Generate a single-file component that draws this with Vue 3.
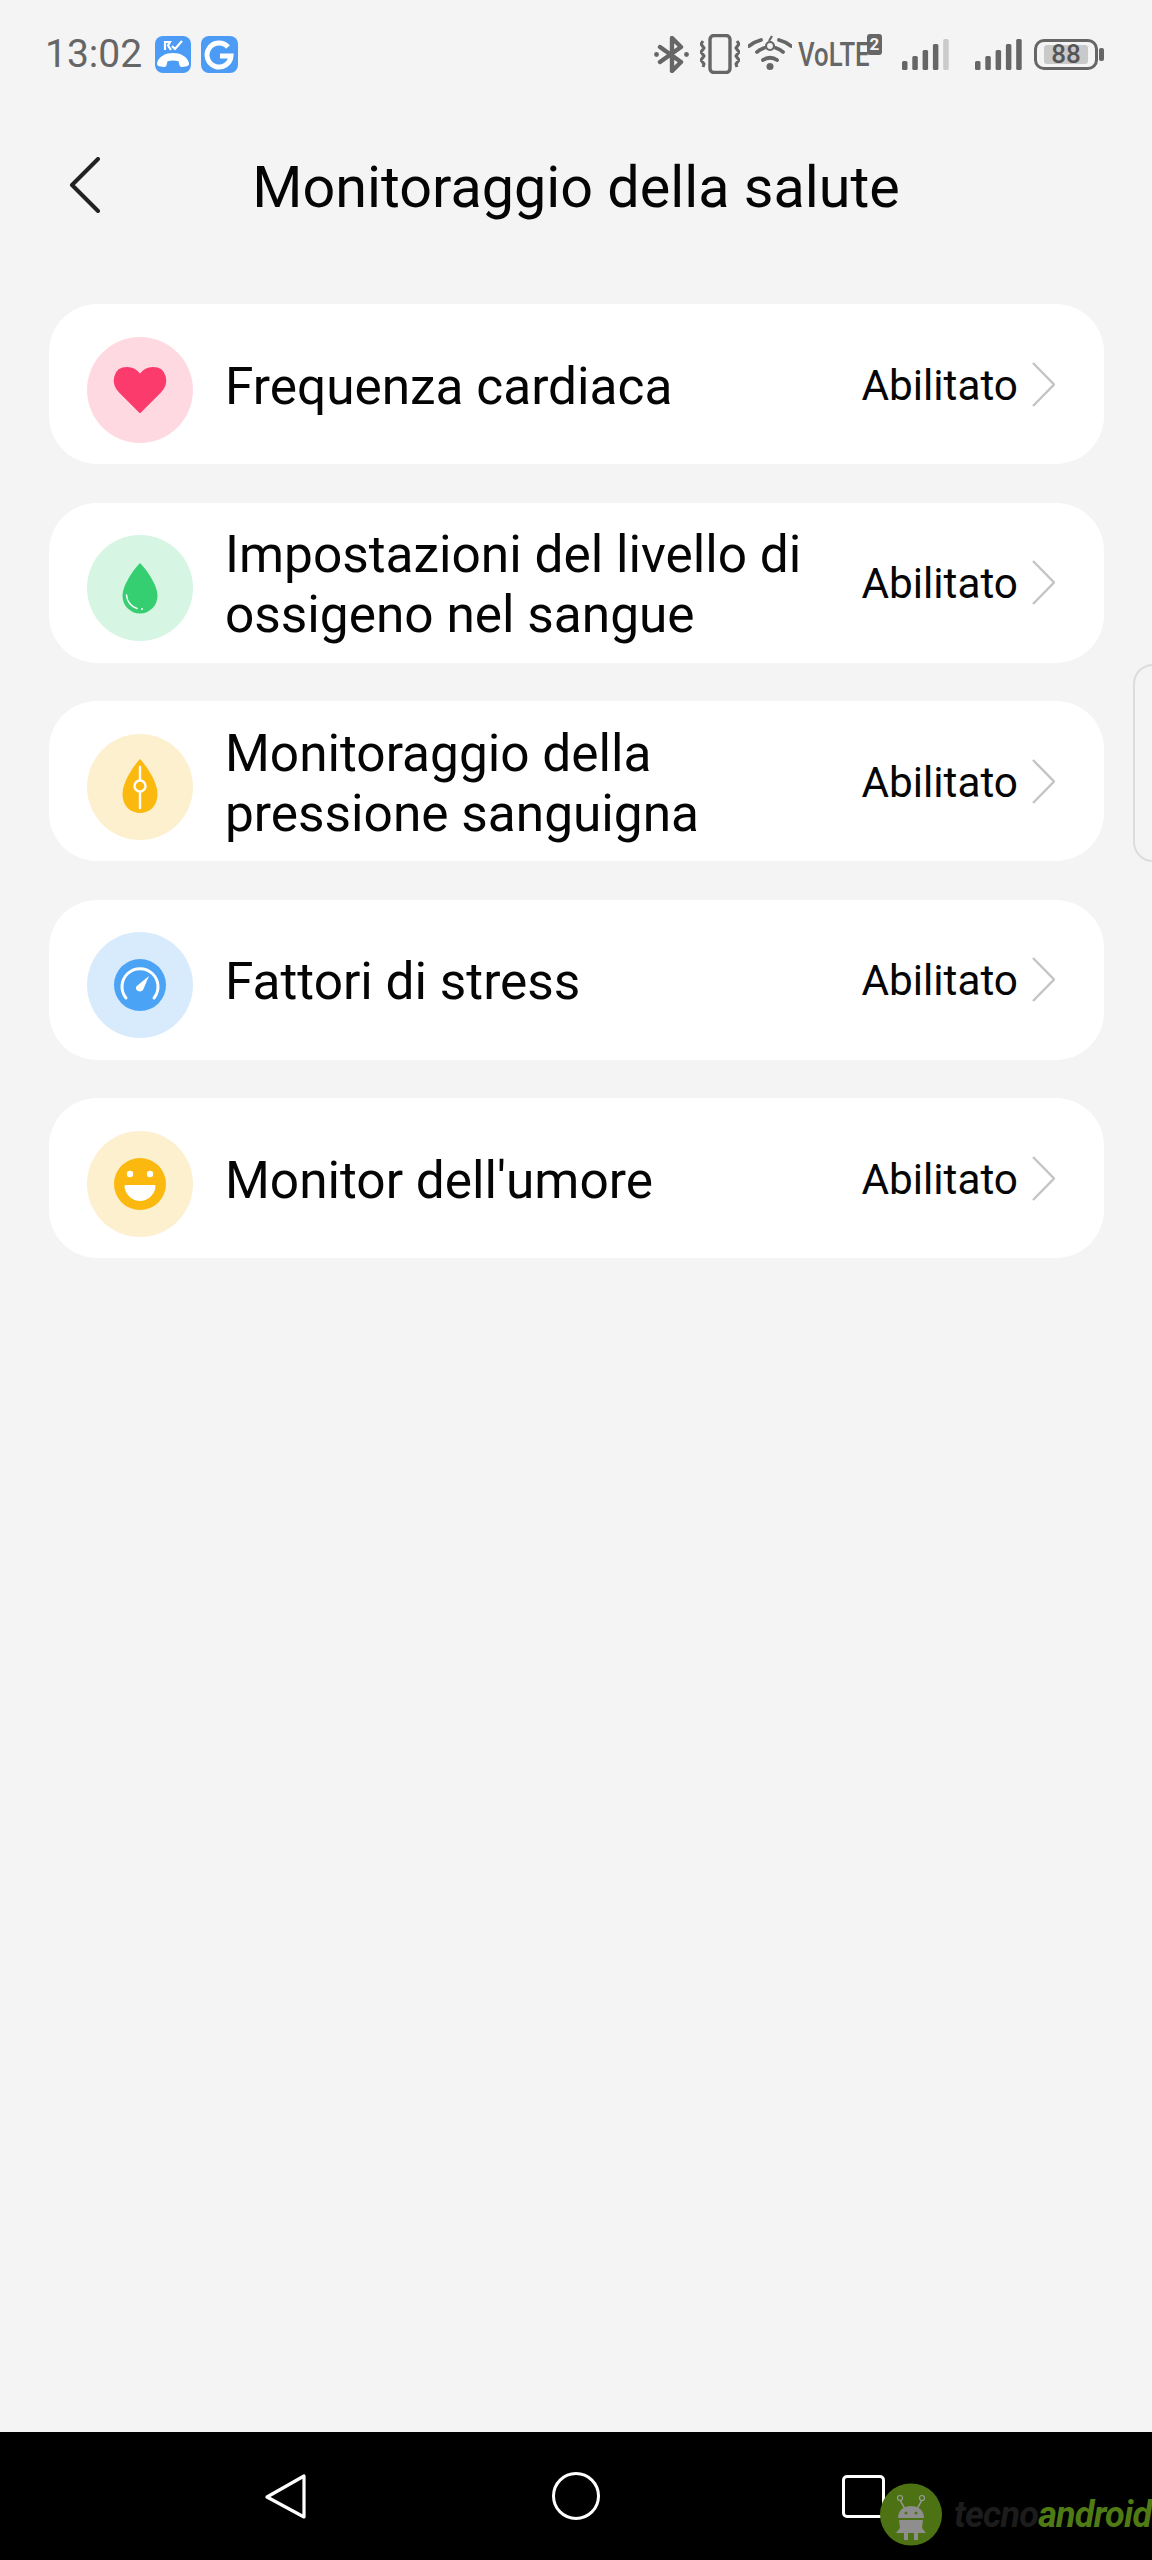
<template>
  <div class="screen">
    <header class="status">
      <span class="time">13:02</span>
      <svg class="app-icon" viewBox="0 0 36 37">
        <rect width="36" height="37" rx="8" fill="#4c9bf5" />
        <path d="M2 27c2-7 9-10 16-10s14 3 16 10c.4 1.600-.6 3-2 3.200l-5 .8c-1.300.2-2.200-.6-2.500-1.700l-1-4c-3.500-1.200-7.500-1.200-11 0l-1 4c-.3 1.100-1.200 1.900-2.500 1.700l-5-.8C2.600 30 1.600 28.600 2 27z" fill="#fff" />
        <path d="M10 14V6h5l-2 3.500 3 4.500M17 10l3 3 7-8" fill="none" stroke="#fff" stroke-width="2.200" />
      </svg>
      <svg class="app-icon second" viewBox="0 0 37 37">
        <rect width="37" height="37" rx="8" fill="#4c9bf5" />
        <path d="M27 11a12 12 0 1 0 3 9H19" fill="none" stroke="#fff" stroke-width="5" />
      </svg>

      <div class="status-right">
        <svg class="bt" viewBox="0 0 35 37">
          <path d="M6 11l21 15-9 9V2l9 9L6 26" fill="none" stroke="#666" stroke-width="4.400" stroke-linejoin="round" stroke-linecap="round" />
          <circle cx="2.500" cy="18.500" r="2.400" fill="#666" />
          <circle cx="32.500" cy="18.500" r="2.400" fill="#666" />
        </svg>
        <svg class="vib" viewBox="0 0 40 40">
          <rect x="10" y="1.500" width="20" height="37" rx="4" fill="none" stroke="#666" stroke-width="3.400" />
          <path d="M3 7l-2 3 3 4-3 4 3 4-3 4 3 4-1 3M37 7l2 3-3 4 3 4-3 4 3 4-3 4 1 3" fill="none" stroke="#666" stroke-width="3" stroke-linejoin="round" />
        </svg>
        <svg class="wifi" viewBox="0 0 44 35">
          <path d="M1 11c4-3 8-5 12-6M31 5c4 1 8 3 12 6M9 17c2-2 4-3 7-4M28 13c3 1 5 2 7 4M15 25c4-3 10-3 14 0" fill="none" stroke="#666" stroke-width="3.800" stroke-linecap="round" />
          <circle cx="22" cy="31.500" r="3.500" fill="#666" />
          <path d="M24 1l-3 5" fill="none" stroke="#666" stroke-width="2.200" />
          <circle cx="22" cy="11" r="4" fill="none" stroke="#666" stroke-width="2.200" />
        </svg>
        <div class="volte">
          <span class="volte-text">VoLTE</span>
          <span class="sim">2</span>
        </div>
        <svg class="signal" viewBox="0 0 47 31">
          <rect v-for="(b, i) in bars" :key="i" :x="i * 10.300" :y="31 - b" width="5.500" :height="b" rx="1.500" :fill="i === 4 ? '#cbcbcb' : '#666'" />
        </svg>
        <svg class="signal second-sim" viewBox="0 0 47 31">
          <rect v-for="(b, i) in bars" :key="i" :x="i * 10.300" :y="31 - b" width="5.500" :height="b" rx="1.500" fill="#666" />
        </svg>
        <div class="battery">
          <div class="cell"><span class="level">88</span></div>
          <div class="nub"></div>
        </div>
      </div>
    </header>

    <div class="titlebar">
      <svg class="back" viewBox="0 0 31 56">
        <path d="M29 2L3 28l26 26" fill="none" stroke="#222" stroke-width="4" stroke-linecap="round" stroke-linejoin="round" />
      </svg>
      <h1 class="title">Monitoraggio della salute</h1>
    </div>

    <main class="list">
      <div v-for="item in items" :key="item.id" class="card">
        <div class="badge" :class="`badge--${item.id}`">
          <svg v-if="item.id === 'heart'" viewBox="0 0 106 106">
            <path d="M53 75L33 55c-9-9-6-24 7-24 6 0 10 3 13 7 3-4 7-7 13-7 13 0 16 15 7 24z" fill="#fb3b6c" stroke="#fb3b6c" stroke-width="2" stroke-linejoin="round" />
          </svg>
          <svg v-else-if="item.id === 'oxygen'" viewBox="0 0 106 106">
            <path d="M53 28c-3 3-17.500 20-17.500 33a17.500 17.500 0 0 0 35 0C70.500 48 56 31 53 28z" fill="#35cf72" />
            <path d="M39.500 60c.5 7 5 12 10.500 13.500" fill="none" stroke="#fff" stroke-width="1.500" stroke-linecap="round" />
            <circle cx="55" cy="74" r="1" fill="#fff" />
          </svg>
          <svg v-else-if="item.id === 'pressure'" viewBox="0 0 106 106">
            <path d="M53 25c-3 3-17.500 21-17.500 35 0 13 9 19 17.500 19s17.500-6 17.500-19C70.500 46 56 28 53 25z" fill="#fbb80f" />
            <path d="M53 33v13M53 58v16" stroke="#fff" stroke-width="2.400" stroke-linecap="round" />
            <circle cx="53" cy="52" r="5.500" fill="none" stroke="#fff" stroke-width="2.400" />
          </svg>
          <svg v-else-if="item.id === 'stress'" viewBox="0 0 106 106">
            <circle cx="53" cy="53" r="26" fill="#4ba3f5" />
            <path d="M39 66a18 18 0 1 1 28 0" fill="none" stroke="#fff" stroke-width="3" stroke-linecap="round" />
            <path d="M62 44l-6 14c-1 2-6 2-7-1-.5-2 .5-3 2-4z" fill="#fff" />
          </svg>
          <svg v-else viewBox="0 0 106 106">
            <circle cx="53" cy="53" r="26" fill="#fbb80f" />
            <circle cx="43" cy="43" r="3.200" fill="#fff" />
            <circle cx="63" cy="43" r="3.200" fill="#fff" />
            <path d="M39 54h28c1 0 1.500.5 1.500 1.500C68 64 60 70 53 70s-15-6-15.500-14.500c0-1 .5-1.500 1.500-1.500z" fill="#fff" />
          </svg>
        </div>
        <p class="label">{{ item.label }}</p>
        <span class="state">Abilitato</span>
        <svg class="chevron" viewBox="0 0 23 45">
          <path d="M1 1l21 21.500L1 44" fill="none" stroke="#c4c4c4" stroke-width="2.400" />
        </svg>
      </div>
    </main>

    <div class="edge-handle"></div>

    <nav class="nav">
      <svg class="nav-back" viewBox="0 0 42 47">
        <path d="M39 3v41L2 24z" fill="none" stroke="#fff" stroke-width="3.200" stroke-linejoin="round" />
      </svg>
      <div class="nav-home"></div>
      <div class="nav-recent"></div>

      <div class="watermark">
        <svg class="robot" viewBox="0 0 62 63">
          <circle cx="31" cy="31.500" r="31" fill="#4d7213" />
          <path d="M20 17l5 9M42 17l-5 9" stroke="#999" stroke-width="1.500" />
          <circle cx="20" cy="15" r="2.500" fill="none" stroke="#999" stroke-width="1.200" />
          <circle cx="42" cy="15" r="2.500" fill="none" stroke="#999" stroke-width="1.200" />
          <path d="M18 35c0-8 6-12 13-12s13 4 13 12z" fill="#8e8e8e" />
          <path d="M19 37h24l-1 8 4 5H38v7h-4v-7h-6v7h-4v-7H16l4-5z" fill="#8e8e8e" />
          <circle cx="26" cy="30" r="1.500" fill="#4d7213" />
          <circle cx="36" cy="30" r="1.500" fill="#4d7213" />
        </svg>
        <span class="wm-text"><span class="wm-tecno">tecno</span><span class="wm-android">android</span></span>
      </div>
    </nav>
  </div>
</template>

<script setup>
const bars = [9, 14, 20, 26, 31]

const items = [
  { id: 'heart', label: 'Frequenza cardiaca' },
  { id: 'oxygen', label: 'Impostazioni del livello di ossigeno nel sangue' },
  { id: 'pressure', label: 'Monitoraggio della pressione sanguigna' },
  { id: 'stress', label: 'Fattori di stress' },
  { id: 'mood', label: "Monitor dell'umore" }
]
</script>

<style scoped>
.screen {
  position: relative;
  display: flex;
  flex-direction: column;
  width: 1152px;
  height: 2560px;
  overflow: hidden;
  background: #f4f4f4;
  font-family: Roboto, "Liberation Sans", sans-serif;
  color: #050505;
}

/* status bar */
.status {
  display: flex;
  align-items: center;
  height: 108px;
  padding: 0 48px 0 45px;
  color: #666;
}

.time {
  font-size: 39px;
  line-height: 1;
  margin-right: 13px;
}

.app-icon {
  width: 36px;
  height: 37px;
}

.app-icon.second {
  width: 37px;
  margin-left: 10px;
}

.status-right {
  display: flex;
  align-items: center;
  margin-left: auto;
}

.bt {
  width: 35px;
  height: 37px;
}

.vib {
  width: 40px;
  height: 40px;
  margin-left: 11px;
}

.wifi {
  width: 44px;
  height: 35px;
  margin-left: 8px;
  margin-top: -4px;
}

.volte {
  display: flex;
  width: 84px;
  height: 36px;
  margin-left: 6px;
  margin-top: -4px;
}

.volte-text {
  width: 69px;
  margin-top: 6px;
  font-size: 33px;
  line-height: 30px;
  font-weight: 500;
  transform: scaleX(0.78);
  transform-origin: left center;
}

.sim {
  width: 15px;
  height: 21px;
  border-radius: 3px;
  background: #666;
  color: #f4f4f4;
  font-size: 17px;
  font-weight: 700;
  line-height: 21px;
  text-align: center;
}

.signal {
  width: 47px;
  height: 31px;
  margin-left: 20px;
}

.signal.second-sim {
  margin-left: 26px;
}

.battery {
  display: flex;
  align-items: center;
  margin-left: 12px;
}

.cell {
  display: flex;
  align-items: center;
  justify-content: center;
  box-sizing: border-box;
  width: 64px;
  height: 31px;
  border: 3px solid #666;
  border-radius: 10px;
}

.level {
  width: 44px;
  height: 19px;
  border-radius: 3px;
  background: #c9c9c9;
  color: #555;
  font-size: 26px;
  font-weight: 500;
  line-height: 19px;
  text-align: center;
}

.nub {
  width: 5px;
  height: 13px;
  margin-left: 1px;
  border-radius: 2px;
  background: #666;
}

/* title row */
.titlebar {
  display: flex;
  align-items: center;
  justify-content: center;
  position: relative;
  height: 160px;
}

.back {
  position: absolute;
  left: 69px;
  top: 49px;
  width: 31px;
  height: 56px;
}

.title {
  margin: 0;
  font-size: 57.500px;
  font-weight: 400;
  line-height: 60px;
}

/* settings cards */
.list {
  display: flex;
  flex-direction: column;
  gap: 38.500px;
  margin-top: 36px;
  padding: 0 48px 0 49px;
}

.card {
  display: flex;
  align-items: center;
  height: 160px;
  padding: 0 49px 0 38px;
  border-radius: 48px;
  background: #fff;
}

.badge {
  flex: none;
  width: 106px;
  height: 106px;
  margin-top: 11px;
  border-radius: 50%;
}

.badge svg {
  display: block;
  width: 106px;
  height: 106px;
}

.badge--heart {
  background: #ffd9e2;
}

.badge--oxygen {
  background: #d6f5e3;
}

.badge--pressure,
.badge--mood {
  background: #fdf0cf;
}

.badge--stress {
  background: #d8ebfd;
}

.label {
  flex: 1;
  margin: 5px 20px 0 32px;
  font-size: 51.400px;
  line-height: 60px;
}

.state {
  margin-top: 3px;
  font-size: 42.300px;
  line-height: 50px;
}

.chevron {
  width: 23px;
  height: 45px;
  margin-left: 14px;
}

/* little tab of the side panel, lies over the page edge */
.edge-handle {
  position: absolute;
  left: 1133px;
  top: 664px;
  width: 40px;
  height: 198px;
  box-sizing: border-box;
  border: 2px solid #dcdcdc;
  border-radius: 24px;
}

/* navigation bar */
.nav {
  position: relative;
  display: flex;
  align-items: center;
  justify-content: center;
  gap: 244px;
  height: 128px;
  margin-top: auto;
  background: #000;
}

.nav-back {
  width: 42px;
  height: 47px;
  margin-right: 1px;
}

.nav-home {
  box-sizing: border-box;
  width: 48px;
  height: 48px;
  border: 3px solid #fff;
  border-radius: 50%;
}

.nav-recent {
  box-sizing: border-box;
  width: 43px;
  height: 43px;
  margin: 0 2px 0 -2px;
  border: 3px solid #fff;
  border-radius: 5px;
}

.watermark {
  position: absolute;
  left: 880px;
  top: 51px;
  display: flex;
  align-items: center;
}

.robot {
  width: 62px;
  height: 63px;
}

.wm-text {
  margin-left: 12px;
  font-family: Roboto, "Liberation Sans", sans-serif;
  font-size: 36px;
  font-style: italic;
  font-weight: 700;
  letter-spacing: -0.800px;
  line-height: 40px;
  white-space: nowrap;
}

.wm-tecno {
  color: #1c1c1c;
}

.wm-android {
  color: #4f7a14;
}
</style>

<style>
html,
body {
  margin: 0;
  background: #f4f4f4;
}
</style>
